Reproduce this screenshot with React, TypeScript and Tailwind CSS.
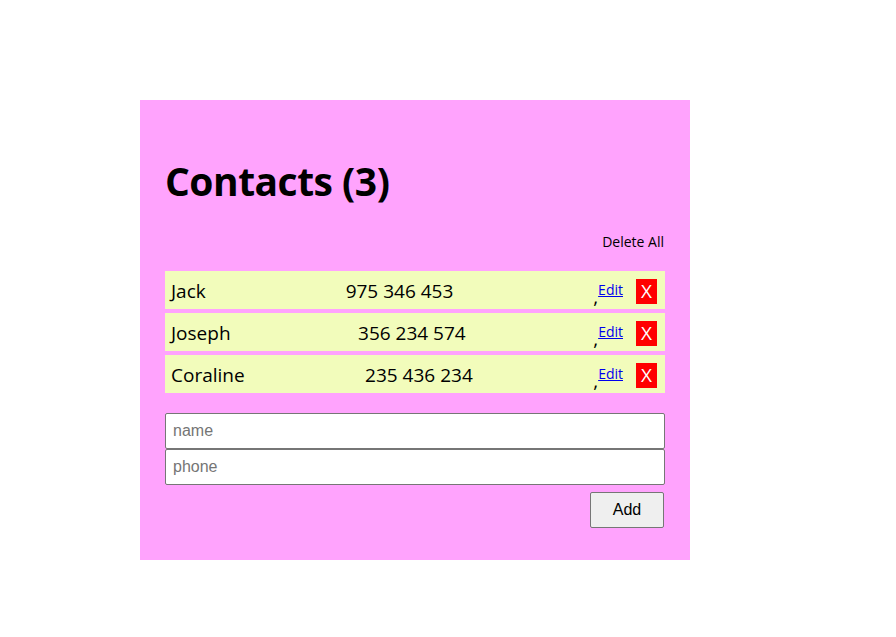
import React from "react";

const contacts = [
  { name: "Jack", phone: "975 346 453" },
  { name: "Joseph", phone: "356 234 574" },
  { name: "Coraline", phone: "235 436 234" },
];

export default function App() {
  return (
    <div className="min-h-[637px] bg-white pt-[100px] pl-[140px]" style={{ fontFamily: '"Open Sans", sans-serif' }}>
      <div className="w-[550px] h-[460px] bg-[#ffa3fd] px-[25px] pt-[56px]">
        <h1 className="text-[39px] leading-[50px] font-bold text-black tracking-[-0.5px]">Contacts (3)</h1>
        <div className="flex justify-end mt-[26px] h-[20px] items-center pr-[1px]">
          <span className="text-[14px] text-black leading-[20px]">Delete All</span>
        </div>
        <div className="mt-[19px] flex flex-col gap-[4px]">
          {contacts.map((c) => (
            <div key={c.name} className="h-[38px] bg-[#f2fcbb] flex items-center justify-between pl-[6px] pr-[8px] text-[19px] text-black">
              <span className="mt-[3px]">{c.name}</span>
              <span className="mt-[3px]">{c.phone}</span>
              <div className="flex items-center h-full">
                <span className="self-end mb-[2px] text-[19px] leading-none">,</span>
                <a href="#" className="text-[14px] text-[#0000ee] underline leading-none -mt-[1px]">Edit</a>
                <span className="ml-[13px] w-[21px] h-[25px] mt-[3px] bg-[#ff0000] text-white text-[19px] flex items-center justify-center leading-none">X</span>
              </div>
            </div>
          ))}
        </div>
        <div className="mt-[20px] flex flex-col" style={{ fontFamily: '"Liberation Sans", Arial, sans-serif' }}>
          <input placeholder="name" className="h-[36px] w-full bg-white border border-[#767676] rounded-[2px] px-[7px] text-[16px] placeholder:text-[#757575] outline-none" />
          <input placeholder="phone" className="h-[36px] w-full bg-white border border-[#767676] rounded-[2px] px-[7px] text-[16px] placeholder:text-[#757575] outline-none" />
          <div className="flex justify-end mt-[7px] pr-[1px]">
            <button className="w-[74px] h-[36px] bg-[#efefef] border border-[#767676] rounded-[2px] text-[16px] text-black">Add</button>
          </div>
        </div>
      </div>
    </div>
  );
}
